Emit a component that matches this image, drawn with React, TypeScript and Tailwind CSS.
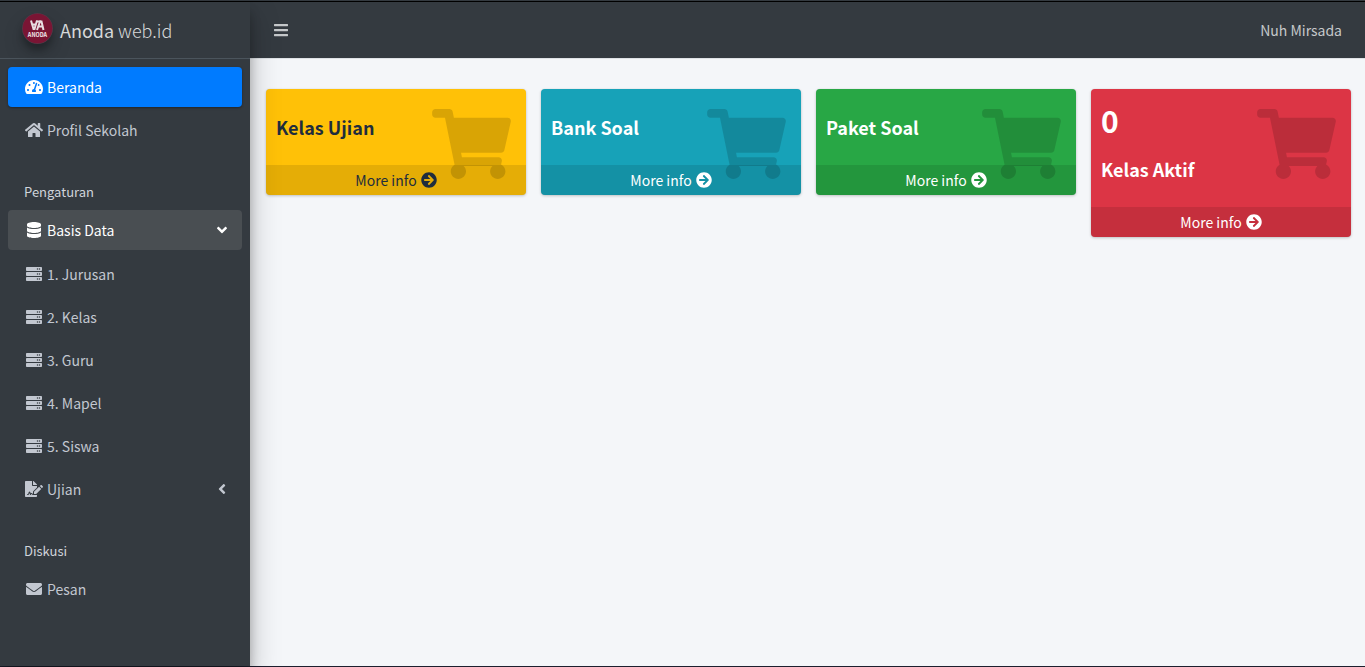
import type { ReactNode } from 'react';
import type { IconType } from 'react-icons';
import {
  FaAngleDown,
  FaAngleLeft,
  FaArrowCircleRight,
  FaBars,
  FaDatabase,
  FaEnvelope,
  FaFileSignature,
  FaHome,
  FaServer,
  FaShoppingCart,
  FaTachometerAlt,
} from 'react-icons/fa';

type NavItemProps = {
  icon: IconType;
  label: string;
  state?: 'active' | 'open' | 'idle';
  arrow?: ReactNode;
};

const navTone = {
  active: 'bg-[#007bff] text-white shadow-[0_1px_3px_rgba(0,0,0,0.12),0_1px_2px_rgba(0,0,0,0.24)]',
  open: 'bg-[#494e52] text-white',
  idle: 'text-[#c2c7d0]',
};

function NavItem({ icon: Icon, label, state = 'idle', arrow }: NavItemProps) {
  return (
    <li className="mb-[3px]">
      <a href="#" className={`flex h-10 items-center rounded px-4 ${navTone[state]}`}>
        <Icon className="mr-[3px] h-4 w-5 shrink-0" />
        <span className="grow">{label}</span>
        {arrow}
      </a>
    </li>
  );
}

function NavHeader({ children }: { children: ReactNode }) {
  return (
    <li className="px-4 pt-7 pb-2 text-[13px] leading-[21px] text-[#d0d4db]">{children}</li>
  );
}

function Logo() {
  return (
    <svg
      viewBox="0 0 62 62"
      className="h-[31px] w-[31px] rounded-full shadow-[0_10px_20px_rgba(0,0,0,0.19),0_6px_6px_rgba(0,0,0,0.23)]"
      aria-hidden="true"
    >
      <circle cx="31" cy="31" r="31" fill="#5a3546" />
      <circle cx="31" cy="31" r="29.5" fill="#7a1534" />
      <g fill="none" stroke="#e9dfe3" strokeWidth="4">
        <path d="M18 15 L23 32 H25 L30 15 M19 23 H29" />
        <path d="M30 34 L36 17 H39 L43 34 M33 27 H42" />
        <path d="M29 17 H38" />
      </g>
      <text
        x="31"
        y="48"
        textAnchor="middle"
        fill="#f1e8eb"
        fontSize="11"
        fontWeight="700"
        fontFamily="Noto Sans CJK SC, sans-serif"
      >
        ANODA
      </text>
    </svg>
  );
}

type CardProps = { title: string; count?: string; tone: string };

function StatCard({ title, count, tone }: CardProps) {
  return (
    <article
      className={`relative overflow-hidden rounded shadow-[0_0_1px_rgba(0,0,0,0.13),0_1px_3px_rgba(0,0,0,0.2)] ${tone}`}
    >
      <FaShoppingCart className="absolute top-5 right-[15px] h-[70px] w-[79px] text-black/15" />
      <div className={`relative px-[10px] ${count ? 'h-[118px] pt-2' : 'h-[76px] pt-[25px]'}`}>
        {count && <p className="mb-[13px] text-[30px] leading-[46px] font-bold">{count}</p>}
        <h2 className="text-lg leading-[26px] font-bold">{title}</h2>
      </div>
      <a href="#" className="relative flex h-[30px] items-center justify-center gap-1 bg-black/10">
        More info
        <FaArrowCircleRight className="h-4 w-4" />
      </a>
    </article>
  );
}

export default function App() {
  return (
    <div className="flex min-h-screen flex-col border-b border-[#1c1f2e] bg-[#f4f6f9] font-['Noto_Sans_CJK_SC',sans-serif] text-[14px] leading-6">
      <div className="h-[2px] border-b border-black bg-[#343a40]" />
      <div className="flex grow">
        <aside className="z-10 w-[250px] shrink-0 bg-[#343a40] shadow-[0_14px_28px_rgba(0,0,0,0.25),0_10px_10px_rgba(0,0,0,0.22)]">
          <a
            href="#"
            className="flex h-[57px] items-start gap-[7px] border-b border-[#4b545c] pt-[11px] pl-[22px] text-lg leading-[34px] text-[#d6d8d9]"
          >
            <Logo />
            <span className="font-light">
              <span className="font-normal">Anoda</span> web.id
            </span>
          </a>
          <nav className="px-2 pt-2">
            <ul>
              <NavItem icon={FaTachometerAlt} label="Beranda" state="active" />
              <NavItem icon={FaHome} label="Profil Sekolah" />
              <NavHeader>Pengaturan</NavHeader>
              <NavItem
                icon={FaDatabase}
                label="Basis Data"
                state="open"
                arrow={<FaAngleDown className="-mr-1 h-4 w-4" />}
              />
              <li>
                <ul className="pt-px">
                  <NavItem icon={FaServer} label="1. Jurusan" />
                  <NavItem icon={FaServer} label="2. Kelas" />
                  <NavItem icon={FaServer} label="3. Guru" />
                  <NavItem icon={FaServer} label="4. Mapel" />
                  <NavItem icon={FaServer} label="5. Siswa" />
                </ul>
              </li>
              <NavItem
                icon={FaFileSignature}
                label="Ujian"
                arrow={<FaAngleLeft className="-mr-1 h-4 w-4" />}
              />
              <NavHeader>Diskusi</NavHeader>
              <NavItem icon={FaEnvelope} label="Pesan" />
            </ul>
          </nav>
        </aside>
        <div className="flex min-w-0 grow flex-col">
          <header className="flex h-[57px] items-center justify-between border-b border-[#dee2e6] bg-[#343a40] px-[23px] text-[#c5c8ca]">
            <button type="button" aria-label="Menu">
              <FaBars className="h-4 w-4" />
            </button>
            <a href="#">Nuh Mirsada</a>
          </header>
          <main className="grid grid-cols-4 items-start gap-[15px] pt-[30px] pr-[14px] pl-4">
            <StatCard title="Kelas Ujian" tone="bg-[#ffc107] text-[#1f2d3d]" />
            <StatCard title="Bank Soal" tone="bg-[#17a2b8] text-white" />
            <StatCard title="Paket Soal" tone="bg-[#28a745] text-white" />
            <StatCard title="Kelas Aktif" count="0" tone="bg-[#dc3545] text-white" />
          </main>
        </div>
      </div>
    </div>
  );
}
